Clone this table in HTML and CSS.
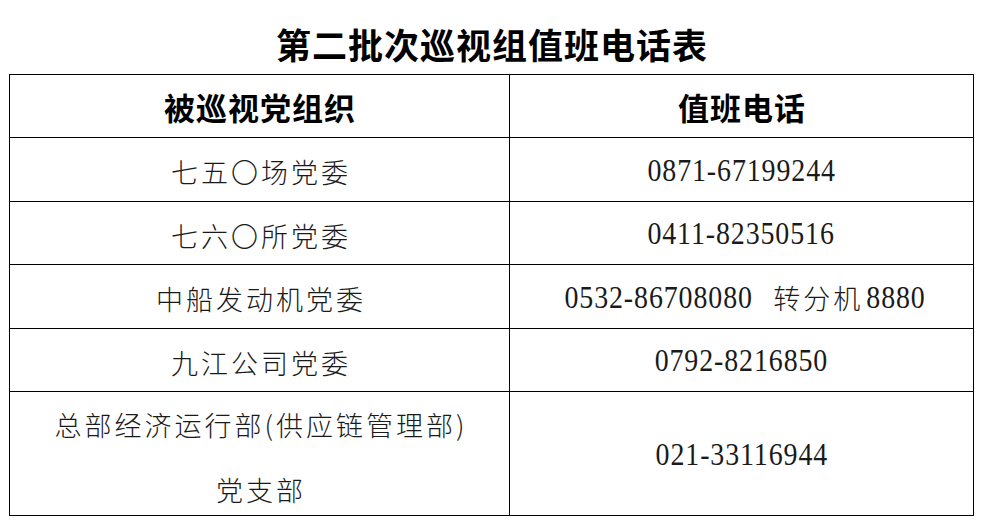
FILE: index.html
```html
<!DOCTYPE html>
<html lang="zh-CN">
<head>
<meta charset="utf-8">
<title>第二批次巡视组值班电话表</title>
<link rel="stylesheet" href="styles.css">
</head>
<body>
<div class="page">
  <h1 class="title">第二批次巡视组值班电话表</h1>
  <div class="grid">
    <div class="cell head">被巡视党组织</div>
    <div class="cell head">值班电话</div>

    <div class="cell name">七五〇场党委</div>
    <div class="cell phone"><span class="num">0871-67199244</span></div>

    <div class="cell name">七六〇所党委</div>
    <div class="cell phone"><span class="num">0411-82350516</span></div>

    <div class="cell name">中船发动机党委</div>
    <div class="cell phone"><span class="num">0532-86708080</span><span class="gap"></span><span class="cjk">转分机</span><span class="num">8880</span></div>

    <div class="cell name">九江公司党委</div>
    <div class="cell phone"><span class="num">0792-8216850</span></div>

    <div class="cell name multi">
      <div class="line">总部经济运行部(供应链管理部)</div>
      <div class="line">党支部</div>
    </div>
    <div class="cell phone"><span class="num">021-33116944</span></div>
  </div>
</div>
</body>
</html>
```

FILE: styles.css
```css
html, body {
  margin: 0;
  padding: 0;
  background: #ffffff;
}

body {
  width: 981px;
  height: 529px;
  overflow: hidden;
  font-family: "Noto Sans CJK SC", "Noto Sans", sans-serif;
  color: #1a1a1a;
}

.page {
  padding-left: 9px;
}

.title {
  margin: 0;
  height: 74px;
  box-sizing: border-box;
  padding-top: 15px;
  line-height: 58px;
  font-size: 35px;
  letter-spacing: 1px;
  font-weight: 600;
  text-align: center;
  color: #000000;
  width: 965px;
  padding-left: 1px;
}

.grid {
  display: grid;
  grid-template-columns: 500px 464px;
  grid-template-rows: 63px 64px 63px 64px 63px 124px;
  width: 965px;
  border-top: 1px solid #000;
  border-left: 1px solid #000;
  box-sizing: border-box;
}

.cell {
  display: flex;
  align-items: center;
  justify-content: center;
  border-right: 1px solid #000;
  border-bottom: 1px solid #000;
  text-align: center;
  white-space: nowrap;
}

.head {
  font-size: 31px;
  font-weight: 600;
  letter-spacing: 1px;
  color: #000;
  padding-left: 1px;
}

.name {
  font-size: 27px;
  font-weight: 300;
  letter-spacing: 3px;
  padding-left: 3px;
  padding-top: 4px;
}

.multi {
  flex-direction: column;
  padding-top: 7px;
}

.line {
  line-height: 65px;
}

.phone {
  padding-top: 2px;
}

.num {
  font-family: "Liberation Serif", serif;
  font-size: 31px;
  letter-spacing: 1px;
  transform: scaleX(0.9);
  display: inline-block;
}

.cjk {
  font-size: 27px;
  font-weight: 300;
  letter-spacing: 3px;
}

.gap {
  display: inline-block;
  width: 10px;
}
```
